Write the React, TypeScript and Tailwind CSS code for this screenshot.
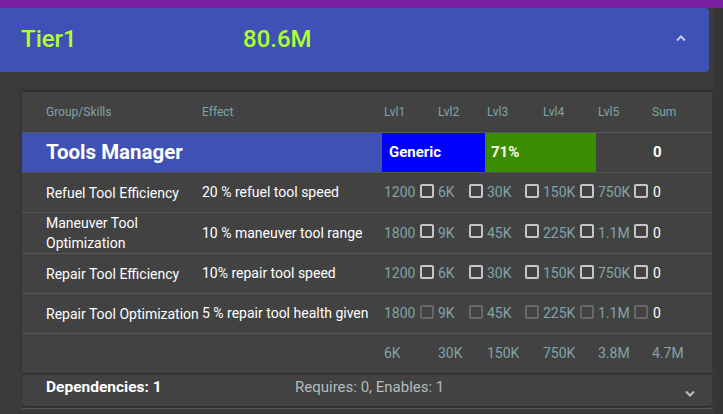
import * as React from 'react';

interface SkillRow {
  name: React.ReactNode;
  effect: string;
  costs: string[];
  sum: string;
  disabled?: boolean;
  tall?: boolean;
}

const rows: SkillRow[] = [
  { name: 'Refuel Tool Efficiency', effect: '20 % refuel tool speed', costs: ['1200', '6K', '30K', '150K', '750K'], sum: '0' },
  { name: <>Maneuver Tool<br />Optimization</>, effect: '10 % maneuver tool range', costs: ['1800', '9K', '45K', '225K', '1.1M'], sum: '0', tall: true },
  { name: 'Repair Tool Efficiency', effect: '10% repair tool speed', costs: ['1200', '6K', '30K', '150K', '750K'], sum: '0' },
  { name: 'Repair Tool Optimization', effect: '5 % repair tool health given', costs: ['1800', '9K', '45K', '225K', '1.1M'], sum: '0', disabled: true },
];

const totals = ['6K', '30K', '150K', '750K', '3.8M', '4.7M'];
const levels = ['Lvl1', 'Lvl2', 'Lvl3', 'Lvl4', 'Lvl5', 'Sum'];

const cols = 'grid grid-cols-[178px_182px_54px_49px_56px_55px_54px_1fr]';

function Box({ disabled }: { disabled?: boolean }) {
  return (
    <span
      className={`mb-[4px] mr-[2px] block h-[14px] w-[14px] shrink-0 rounded-[2px] border-2 ${disabled ? 'border-[#676767]' : 'border-[#c6c6c6]'}`}
    />
  );
}

export default function App() {
  return (
    <div className="h-[414px] w-full overflow-hidden bg-[#3b3b3b] font-['Roboto',sans-serif]">
      <div className="h-[8px] bg-[#7b1fa2]" />
      <div className="flex">
        <div className="w-[714px]">
          <div className="mr-[5px] flex h-[64px] items-center rounded-r-[4px] bg-[#3f51b5] pb-[3px] pl-[21px] pr-[23px] text-[24px] font-medium text-[#adff2f]">
            <span className="w-[222px]">Tier1</span>
            <span className="flex-1">80.6M</span>
            <svg width="10" height="7" viewBox="0 0 10 7" fill="none">
              <polyline points="1,5.5 5,1.5 9,5.5" stroke="#c5cae9" strokeWidth="2" />
            </svg>
          </div>

          <div className="ml-[22px] mr-[2px] mt-[20px] bg-[#424242] shadow-[0_-2px_4px_rgba(0,0,0,0.25)]">
            <div className={`${cols} h-[41px] items-center border-b border-[#585858] text-[12px] text-[#80a4a8]`}>
              <span className="pl-[24px]">Group/Skills</span>
              <span className="pl-[2px]">Effect</span>
              {levels.map((l) => (
                <span key={l} className="pl-[2px]">{l}</span>
              ))}
            </div>

            <div className={`${cols} h-[40px] border-b border-[#555555] text-white`}>
              <div className="col-span-2 flex items-center bg-[#3f51b5] pl-[24px] text-[20.5px] font-bold">Tools Manager</div>
              <div className="col-span-2 flex items-center bg-[#0000ff] pl-[7px] text-[15px] font-bold">Generic</div>
              <div className="col-span-2 flex items-center bg-[#3a8c00] pl-[6px] text-[15px] font-bold text-[#fbfbe8]">71%</div>
              <div />
              <div className="flex items-center pl-[3px] text-[15px] font-bold">0</div>
            </div>

            {rows.map((r, i) => (
              <div
                key={i}
                className={`${cols} ${r.tall ? 'h-[41px]' : 'h-[40px]'} items-center border-b border-[#555555] text-[14px]`}
              >
                <span className="whitespace-nowrap pl-[24px] leading-[20px] text-white">{r.name}</span>
                <span className="whitespace-nowrap pl-[2px] text-white">{r.effect}</span>
                {r.costs.map((c, j) => (
                  <div key={j} className="flex items-center justify-between pl-[2px] text-[#80a4a8]">
                    <span>{c}</span>
                    <Box disabled={r.disabled} />
                  </div>
                ))}
                <span className="pl-[3px] text-white">{r.sum}</span>
              </div>
            ))}

            <div className={`${cols} h-[40px] items-center border-b border-[#2f2f2f] text-[14px] text-[#80a4a8]`}>
              <span />
              <span />
              {totals.map((t) => (
                <span key={t} className="pl-[2px]">{t}</span>
              ))}
            </div>
          </div>

          <div className="ml-[22px] mr-[2px] mt-[1px] flex h-[31px] rounded-b-[4px] bg-[#424242] shadow-[0_1px_2px_rgba(0,0,0,0.35)]">
            <span className="w-[273px] pl-[24px] pt-[2px] text-[15.5px] font-bold leading-[20px] text-white">Dependencies: 1</span>
            <span className="flex-1 pt-[2px] text-[15px] leading-[20px] text-[#b4bcbc]">Requires: 0, Enables: 1</span>
            <svg className="mr-[17px] mt-[15px]" width="10" height="7" viewBox="0 0 10 7" fill="none">
              <polyline points="1,1.5 5,5.5 9,1.5" stroke="#bdbdbd" strokeWidth="2" />
            </svg>
          </div>
          <div className="ml-[22px] mr-[2px] mt-[2px] h-px bg-[#555555]" />
        </div>
        <div className="h-[406px] flex-1 bg-[#353535]" />
      </div>
    </div>
  );
}
